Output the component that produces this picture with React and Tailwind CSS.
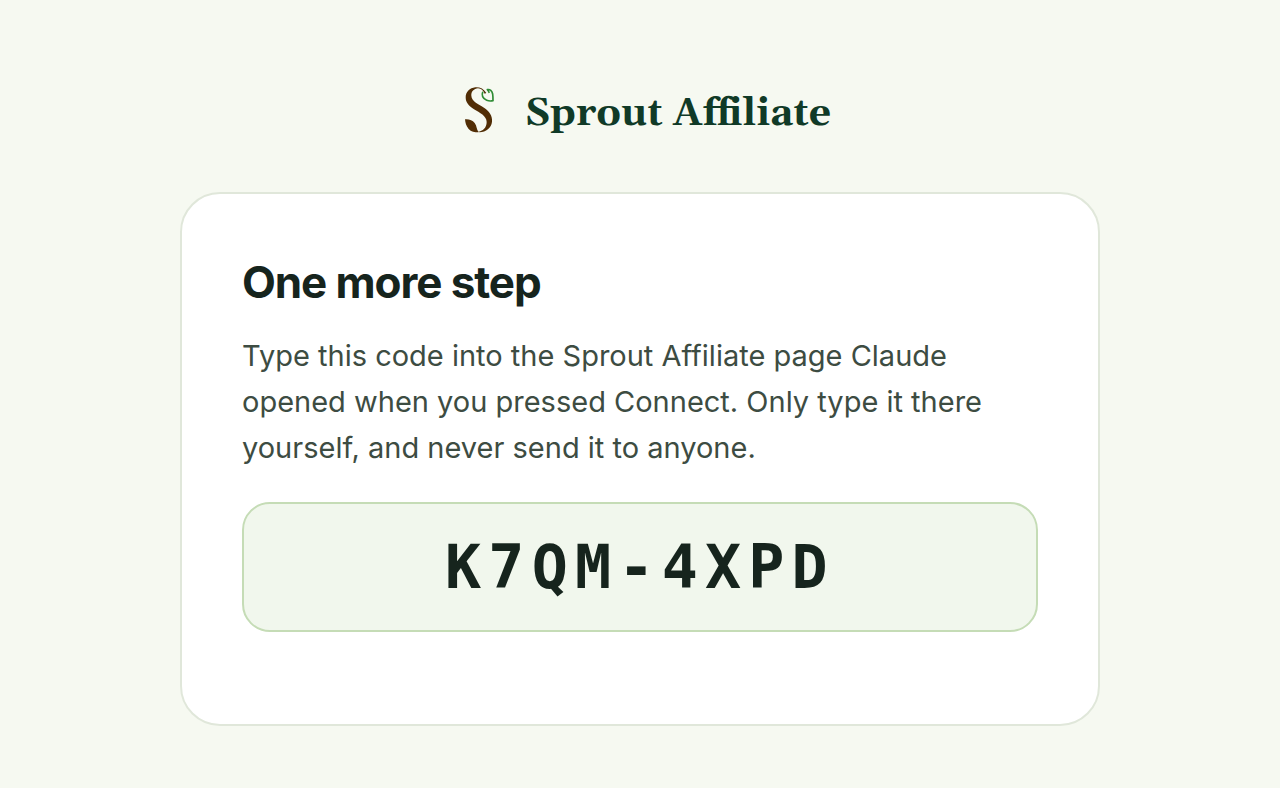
const CODE = "K7QM-4XPD";

function SproutLogo() {
  return (
    <svg viewBox="0 0 180 180" className="h-[60px] w-[60px] shrink-0" fill="none" aria-hidden="true">
      <path
        d="M112 39C104 26 92 21 79 22C62 24 50 36 50 52C50 68 60 79 75 88C92 98 113 108 113 126C113 143 102 153 86 156C107 159 127 146 129 125C131 107 120 93 105 83C87 71 68 64 67 47C66 35 75 26 87 25C97 25 103 32 107 41Z"
        fill="#512d05"
      />
      <path d="M48 118C60 117 70 120 77 129C84 138 82 148 89 157C77 157 66 155 59 147C51 138 49 128 48 118Z" fill="#512d05" />
      <path
        d="M115 29C123 27 129 33 131 42C132 49 132 55 132 62C119 65 105 60 101 50C99 45 99 41 101 37M115 29C117 31 119 34 120 37"
        stroke="#2e8b34"
        strokeWidth="5"
        strokeLinecap="round"
        strokeLinejoin="round"
      />
    </svg>
  );
}

export default function App() {
  return (
    <div className="min-h-screen bg-[#f6f9f1] px-6 pt-20 pb-16 font-[Inter,'Liberation_Sans',sans-serif] text-[#16241d]">
      <header className="flex items-center justify-center gap-4">
        <SproutLogo />
        <p className="pt-2 font-['Gelasio',Georgia,'Liberation_Serif',serif] text-[39px] leading-[52px] font-bold text-[#103a27]">
          Sprout Affiliate
        </p>
      </header>

      <main className="mx-auto mt-[52px] max-w-[920px] rounded-[40px] border-2 border-[#e0e7da] bg-white px-[60px] pt-[60px] pb-[92px]">
        <h1 className="text-[44px] leading-[56px] font-bold tracking-tight">One more step</h1>
        <p className="mt-[23px] text-[29px] leading-[46px] text-[#3d4c42]">
          Type this code into the Sprout Affiliate page Claude opened when you pressed Connect. Only type it there
          yourself, and never send it to anyone.
        </p>
        <div className="mt-[31px] rounded-[28px] border-2 border-[#c5dcb6] bg-[#f1f7ed] py-6 text-center font-['DejaVu_Sans_Mono',monospace] text-[60px] leading-[78px] font-bold tracking-[0.12em]">
          {CODE}
        </div>
      </main>
    </div>
  );
}
